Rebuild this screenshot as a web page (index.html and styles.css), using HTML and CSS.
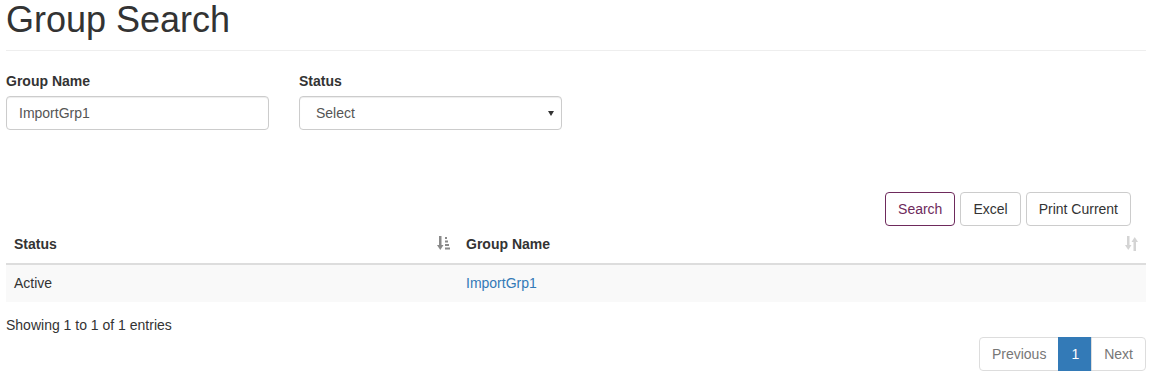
FILE: index.html
```html
<!DOCTYPE html>
<html lang="en">
<head>
  <meta charset="UTF-8" />
  <meta name="viewport" content="width=device-width, initial-scale=1.0" />
  <title>Group Search</title>
  <link rel="stylesheet" href="styles.css">
</head>
<body>

  <div class="page-header">
    <h1>Group Search</h1>
  </div>

  <div class="filters">
    <div class="field">
      <label for="group-name">Group Name</label>
      <input type="text" id="group-name" class="form-control" value="ImportGrp1" />
    </div>
    <div class="field">
      <label for="status">Status</label>
      <div class="select-wrap">
        <select id="status" class="form-control select">
          <option>Select</option>
          <option>Active</option>
          <option>Inactive</option>
        </select>
      </div>
    </div>
  </div>

  <div class="toolbar">
    <button class="btn btn-search">Search</button>
    <button class="btn">Excel</button>
    <button class="btn">Print Current</button>
  </div>

  <table class="results">
    <thead>
      <tr>
        <th class="col-status">
          <div class="th-inner">
            <span>Status</span>
            <!-- sorted column -->
            <svg class="sort-icon sorted" width="13" height="15" viewBox="0 0 13 15">
              <rect x="2" y="0" width="2.5" height="10" />
              <polygon points="0,9 6.5,9 3.25,14" />
              <rect x="8" y="1" width="2" height="2" />
              <rect x="8" y="4.5" width="3" height="2" />
              <rect x="8" y="8" width="4" height="2" />
              <rect x="8" y="11.5" width="5" height="2" />
            </svg>
          </div>
        </th>
        <th>
          <div class="th-inner">
            <span>Group Name</span>
            <svg class="sort-icon" width="13" height="15" viewBox="0 0 13 15">
              <rect x="2" y="0" width="2.5" height="10" />
              <polygon points="0,9 6.5,9 3.25,14" />
              <rect x="8.5" y="5" width="2.5" height="10" />
              <polygon points="6.5,6 13,6 9.75,1" />
            </svg>
          </div>
        </th>
      </tr>
    </thead>
    <tbody>
      <tr>
        <td>Active</td>
        <td><a href="#">ImportGrp1</a></td>
      </tr>
    </tbody>
  </table>

  <div class="table-info">Showing 1 to 1 of 1 entries</div>

  <div class="pager">
    <ul class="pagination">
      <li class="disabled"><a href="#">Previous</a></li>
      <li class="active"><a href="#">1</a></li>
      <li class="disabled"><a href="#">Next</a></li>
    </ul>
  </div>

</body>
</html>
```

FILE: styles.css
```css
html, body {
  margin: 0;
  padding: 0;
}

body {
  font-family: "Liberation Sans", Arial, sans-serif;
  font-size: 14px;
  line-height: 20px;
  color: #333;
  background: #fff;
  padding: 0 5px 0 6px;
}

.page-header {
  padding-bottom: 10px;
  border-bottom: 1px solid #eee;
}

.page-header h1 {
  margin: 0;
  font-size: 36px;
  font-weight: 500;
  line-height: 1.1;
}

.filters {
  display: flex;
  gap: 30px;
  margin-top: 20px;
}

.field {
  width: 263px;
}

label {
  display: block;
  font-weight: bold;
  margin-bottom: 5px;
}

.form-control {
  display: block;
  box-sizing: border-box;
  width: 100%;
  height: 34px;
  padding: 6px 12px;
  font-family: inherit;
  font-size: 14px;
  color: #555;
  background: #fff;
  border: 1px solid #ccc;
  border-radius: 4px;
  box-shadow: inset 0 1px 1px rgba(0, 0, 0, 0.075);
}

.select-wrap {
  position: relative;
}

.select {
  appearance: none;
  -webkit-appearance: none;
  padding-left: 16px;
}

/* little arrow of the select */
.select-wrap::after {
  content: "";
  position: absolute;
  right: 8px;
  top: 15px;
  border-left: 3px solid transparent;
  border-right: 3px solid transparent;
  border-top: 5px solid #333;
  pointer-events: none;
}

.toolbar {
  display: flex;
  justify-content: flex-end;
  gap: 5px;
  margin-top: 62px;
  padding-right: 15px;
}

.btn {
  padding: 6px 12px;
  font-family: inherit;
  font-size: 14px;
  line-height: 20px;
  color: #333;
  background: #fff;
  border: 1px solid #ccc;
  border-radius: 4px;
  cursor: pointer;
}

.btn-search {
  color: #6e2a5c;
  border-color: #6e2a5c;
}

.results {
  width: 100%;
  border-collapse: collapse;
}

.results th,
.results td {
  padding: 8px 8px 9px;
  text-align: left;
  line-height: 20px;
}

.results th {
  border-bottom: 2px solid #ddd;
}

.results td {
  border-top: 1px solid #ddd;
  background: #f9f9f9;
}

.col-status {
  width: 436px;
}

.th-inner {
  display: flex;
  justify-content: space-between;
  align-items: center;
}

.sort-icon {
  fill: #d4d4d4;
}

.sort-icon.sorted {
  fill: #8a8a8a;
}

a {
  color: #337ab7;
  text-decoration: none;
}

.table-info {
  margin-top: 13px;
}

.pager {
  display: flex;
  justify-content: flex-end;
  margin-top: 2px;
}

.pagination {
  display: flex;
  margin: 0;
  padding: 0;
  list-style: none;
}

.pagination a {
  display: block;
  padding: 6px 12px;
  margin-left: -1px;
  border: 1px solid #ddd;
  color: #777;
  background: #fff;
}

.pagination li:first-child a {
  margin-left: 0;
  border-radius: 4px 0 0 4px;
}

.pagination li:last-child a {
  border-radius: 0 4px 4px 0;
}

.pagination .active a {
  color: #fff;
  background: #337ab7;
  border-color: #337ab7;
}
```
